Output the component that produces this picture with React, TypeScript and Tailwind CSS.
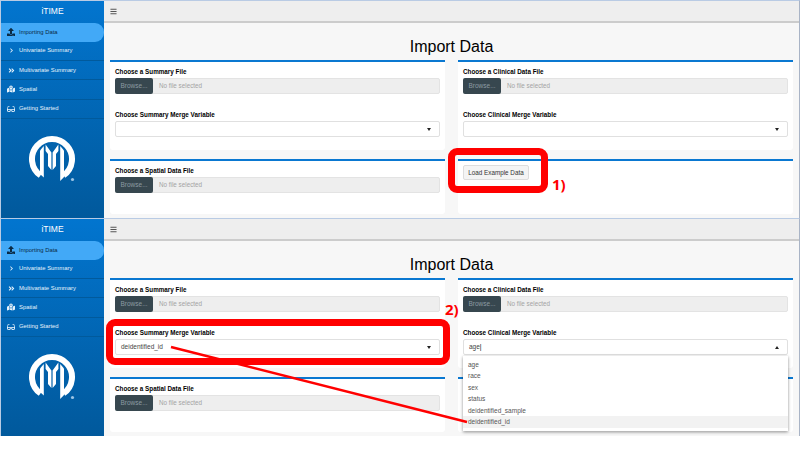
import { FaAngleDoubleRight, FaBars, FaChevronRight, FaGlasses, FaMapMarkedAlt, FaUpload } from 'react-icons/fa';
import type { ReactNode } from 'react';

const menu = [
  { label: 'Importing Data', icon: <FaUpload size={8} /> },
  { label: 'Univariate Summary', icon: <FaChevronRight size={5} /> },
  { label: 'Multivariate Summary', icon: <FaAngleDoubleRight size={7} /> },
  { label: 'Spatial', icon: <FaMapMarkedAlt size={8} /> },
  { label: 'Getting Started', icon: <FaGlasses size={8} /> },
];

const options = ['age', 'race', 'sex', 'status', 'deidentified_sample', 'deidentified_id'];

function Logo() {
  return (
    <svg width="50" height="48" viewBox="0 0 50 48" className="ml-[28px]">
      <path d="M11.5 39.4A20 20 0 1 1 34.5 39.4" fill="none" stroke="white" strokeWidth="6" />
      <path d="M11 14.5L14.8 10V41.5L11 38Z" fill="white" />
      <path d="M35 14.5L31.2 10V45L35 41Z" fill="white" />
      <path d="M16.6 8.5L22.4 16.5V34L19 30V18L16.6 15Z" fill="white" />
      <path d="M29.4 8.5L23.6 16.5V34L27 30V18L29.4 15Z" fill="white" />
      <circle cx="43.5" cy="43.5" r="1.6" fill="#9cc4e4" />
    </svg>
  );
}

function Sidebar() {
  return (
    <aside className="w-[103px] shrink-0 bg-gradient-to-b from-[#0275cf] to-[#01599c] text-white">
      <div className="h-[21.5px] flex items-center justify-center text-[8.5px] font-medium">iTIME</div>
      <nav>
        {menu.map((item, i) => (
          <div
            key={item.label}
            className={
              i === 0
                ? 'h-[19px] flex items-center gap-[4px] pl-[6px] rounded-r-[9px] bg-[#42a9f7] text-[#0b2b45]'
                : 'h-[19.4px] flex items-center gap-[4px] pl-[6px] border-b border-[#015a9c] text-[#e6f2fb]'
            }
          >
            <span className="w-[8px] flex justify-center">{item.icon}</span>
            <span className="text-[5.9px]">{item.label}</span>
          </div>
        ))}
      </nav>
      <div className="mt-[17px]">
        <Logo />
      </div>
    </aside>
  );
}

function Card({ children, h }: { children?: ReactNode; h: string }) {
  return <div className={`bg-white border-t-2 border-[#0a78d1] rounded-b-[3px] px-[5px] pt-[5px] ${h}`}>{children}</div>;
}

function FileField({ label }: { label: string }) {
  return (
    <div>
      <div className="text-[6.3px] leading-[9px] font-bold text-black h-[11px]">{label}</div>
      <div className="flex h-[16px] bg-[#eeeeee] rounded-[2px] border border-[#e3e3e3]">
        <div className="w-[38px] -ml-px -my-px bg-[#37474f] rounded-[2px] text-[6.5px] text-[#8d9ba2] flex items-center justify-center">Browse...</div>
        <div className="pl-[6px] text-[6.3px] text-[#a3a3a3] flex items-center">No file selected</div>
      </div>
    </div>
  );
}

function SelectField({ label, value, open, mark }: { label: string; value?: string; open?: boolean; mark?: boolean }) {
  return (
    <div className="mt-[16px]">
      <div className="text-[6.3px] leading-[9px] font-bold text-black h-[11px]">{label}</div>
      <div className="flex items-center justify-between h-[16px] bg-white rounded-[2px] border border-[#e0e0e0] pl-[5px] pr-[8px] text-[6.5px] text-[#444]">
        <span>
          {value}
          {mark && <span className="text-black">|</span>}
        </span>
        {open ? (
          <span className="w-0 h-0 border-x-[2.5px] border-x-transparent border-b-[3px] border-b-[#222]" />
        ) : (
          <span className="w-0 h-0 border-x-[2.5px] border-x-transparent border-t-[3px] border-t-[#222]" />
        )}
      </div>
    </div>
  );
}

function Panel({ summary, clinical, open, children }: { summary?: string; clinical?: string; open?: boolean; children?: ReactNode }) {
  return (
    <div className="relative h-[218px] flex border-t border-l border-r border-[#b9cbe4] border-r-[#a9b4c6] overflow-hidden">
      <Sidebar />
      <main className="flex-1 min-w-0 bg-[#f7f7f7] flex flex-col">
        <div className="h-[22px] shrink-0 bg-[#eeeeee] border-b-2 border-[#cccccc] flex items-center pl-[6px] text-[#555]">
          <FaBars size={7} />
        </div>
        <h1 className="mt-[14px] mb-[3px] h-[20px] leading-[20px] text-center text-[16px] text-black">Import Data</h1>
        <div className="grid grid-cols-2 gap-x-[13px] gap-y-[9px] pl-[6px] pr-[6px]">
          <Card h="h-[90px]">
            <FileField label="Choose a Summary File" />
            <SelectField label="Choose Summary Merge Variable" value={summary} />
          </Card>
          <Card h="h-[90px]">
            <FileField label="Choose a Clinical Data File" />
            <SelectField label="Choose Clinical Merge Variable" value={clinical} open={open} mark={open} />
          </Card>
          <Card h="h-[55px]">
            <FileField label="Choose a Spatial Data File" />
          </Card>
          <Card h="h-[55px]">
            {/* the open dropdown covers this button in the lower panel */}
            {!open && (
              <button className="block -mt-px h-[15px] w-[66px] bg-[#f4f4f4] border border-[#dddddd] rounded-[2px] text-[6.3px] text-[#333]">Load Example Data</button>
            )}
          </Card>
        </div>
      </main>
      {children}
    </div>
  );
}

export default function App() {
  return (
    <div className="w-[800px] h-[449px] bg-white overflow-hidden font-['Liberation_Sans',Arial,sans-serif]">
      <Panel>
        <div className="absolute left-[447px] top-[147px] w-[100px] h-[45px] border-[7px] border-[#ff0000] rounded-[9px]" />
        <div className="absolute left-[551px] top-[173px] text-[15px] leading-[20px] font-bold text-[#ff0000] font-['Open_Sans',sans-serif]">1)</div>
      </Panel>
      <Panel summary="deidentified_id" clinical="age" open>
        <div className="absolute left-[462px] top-[137px] w-[325px] h-[75px] bg-white shadow-[0_1px_3px_rgba(0,0,0,0.45)] text-[6.5px] text-[#555] pt-[2.5px]">
          {options.map((o, i) => (
            <div key={o} className={i === 5 ? 'h-[11.6px] leading-[11.6px] pl-[5px] bg-[#f2f2f2]' : 'h-[11.6px] leading-[11.6px] pl-[5px]'}>
              {o}
            </div>
          ))}
        </div>
        <div className="absolute left-[105px] top-[100px] w-[344px] h-[46px] border-[7px] border-[#ff0000] rounded-[9px]" />
        <div className="absolute left-[444px] top-[80px] text-[15px] leading-[20px] font-bold text-[#ff0000] font-['Open_Sans',sans-serif]">2)</div>
        <svg className="absolute left-0 top-0 pointer-events-none" width="800" height="218">
          <line x1="170" y1="128" x2="466" y2="203" stroke="#ff0000" strokeWidth="2.5" />
        </svg>
      </Panel>
    </div>
  );
}
